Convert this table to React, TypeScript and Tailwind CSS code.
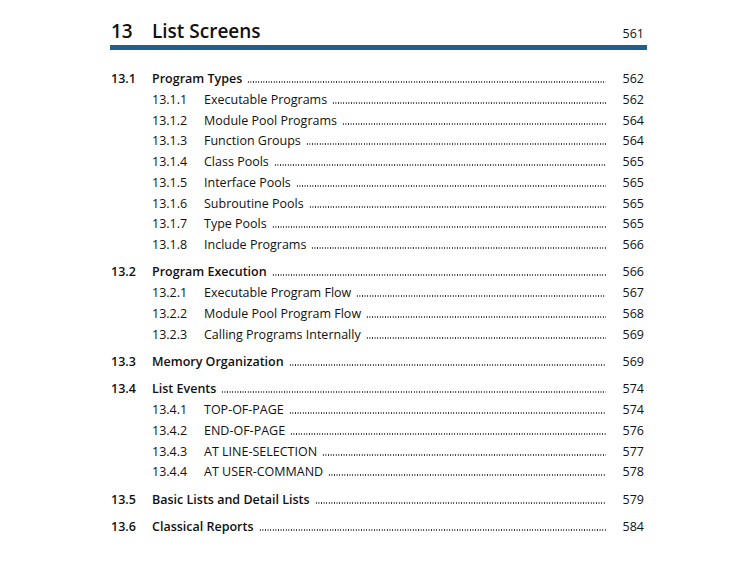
type Entry = { num: string; title: string; page: string; level: 1 | 2 }

const entries: Entry[] = [
    { num: '13.1', title: 'Program Types', page: '562', level: 1 },
    { num: '13.1.1', title: 'Executable Programs', page: '562', level: 2 },
    { num: '13.1.2', title: 'Module Pool Programs', page: '564', level: 2 },
    { num: '13.1.3', title: 'Function Groups', page: '564', level: 2 },
    { num: '13.1.4', title: 'Class Pools', page: '565', level: 2 },
    { num: '13.1.5', title: 'Interface Pools', page: '565', level: 2 },
    { num: '13.1.6', title: 'Subroutine Pools', page: '565', level: 2 },
    { num: '13.1.7', title: 'Type Pools', page: '565', level: 2 },
    { num: '13.1.8', title: 'Include Programs', page: '566', level: 2 },
    { num: '13.2', title: 'Program Execution', page: '566', level: 1 },
    { num: '13.2.1', title: 'Executable Program Flow', page: '567', level: 2 },
    { num: '13.2.2', title: 'Module Pool Program Flow', page: '568', level: 2 },
    { num: '13.2.3', title: 'Calling Programs Internally', page: '569', level: 2 },
    { num: '13.3', title: 'Memory Organization', page: '569', level: 1 },
    { num: '13.4', title: 'List Events', page: '574', level: 1 },
    { num: '13.4.1', title: 'TOP-OF-PAGE', page: '574', level: 2 },
    { num: '13.4.2', title: 'END-OF-PAGE', page: '576', level: 2 },
    { num: '13.4.3', title: 'AT LINE-SELECTION', page: '577', level: 2 },
    { num: '13.4.4', title: 'AT USER-COMMAND', page: '578', level: 2 },
    { num: '13.5', title: 'Basic Lists and Detail Lists', page: '579', level: 1 },
    { num: '13.6', title: 'Classical Reports', page: '584', level: 1 },
]

function Row({ e }: { e: Entry }) {
    const top = e.level === 1
    return (
        <div className={`flex items-baseline h-[20.75px] ${top ? 'mt-[6.6px] first:mt-0' : ''}`}>
            {top ? (
                <>
                    <span className="w-[41px] shrink-0 font-semibold">{e.num}</span>
                    <span className="shrink-0 font-semibold">{e.title}</span>
                </>
            ) : (
                <>
                    <span className="w-[41px] shrink-0" />
                    <span className="w-[52px] shrink-0">{e.num}</span>
                    <span className="shrink-0">{e.title}</span>
                </>
            )}
            {/* dotted leader */}
            <span className="flex-1 h-[2px] ml-[5px] bg-[radial-gradient(circle,#333_0.65px,transparent_1px)] bg-[length:2.6px_2px] bg-repeat-x" />
            <span className="w-[38px] shrink-0 text-right">{e.page}</span>
        </div>
    )
}

export default function App() {
    return (
        <div className="w-[751px] h-[575px] bg-white text-[#111] font-['Open_Sans','Lato',sans-serif]">
            <div className="ml-[110px] w-[537px] pt-[22px]">
                {/* chapter header */}
                <div className="flex items-baseline px-[1px] leading-none">
                    <span className="w-[41px] text-[19px] font-semibold">13</span>
                    <span className="flex-1 text-[19px] font-semibold">List Screens</span>
                    <span className="text-[12.5px] pr-[2px]">561</span>
                </div>
                <div className="h-[5px] bg-[#1e5f8c] mt-[4px]" />
                {/* entries */}
                <div className="mt-[20px] pl-[1px] pr-[3px] text-[12.5px]">
                    {entries.map((e) => (
                        <Row key={e.num} e={e} />
                    ))}
                </div>
            </div>
        </div>
    )
}
